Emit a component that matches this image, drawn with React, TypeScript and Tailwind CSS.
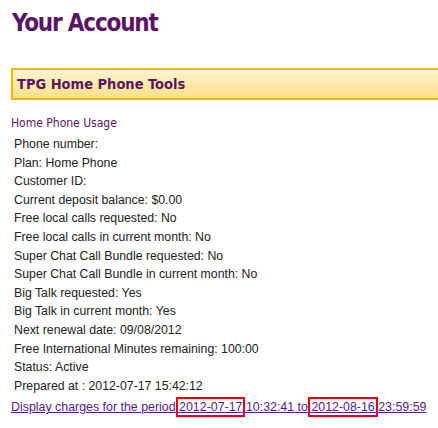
const rows = [
  "Phone number:",
  "Plan: Home Phone",
  "Customer ID:",
  "Current deposit balance: $0.00",
  "Free local calls requested: No",
  "Free local calls in current month: No",
  "Super Chat Call Bundle requested: No",
  "Super Chat Call Bundle in current month: No",
  "Big Talk requested: Yes",
  "Big Talk in current month: Yes",
  "Next renewal date: 09/08/2012",
  "Free International Minutes remaining: 100:00",
  "Status: Active",
  "Prepared at : 2012-07-17 15:42:12",
];

export default function App() {
  return (
    <div className="h-[428px] w-[438px] overflow-hidden bg-white">
      <h1 className="pl-3 pt-[8px] font-['DejaVu_Sans_Condensed','DejaVu_Sans',sans-serif] text-[24px] font-bold leading-[30px] tracking-[-1.2px] text-[#5a1464]">
        Your Account
      </h1>

      <div className="ml-[11px] mt-[30px] -mr-4 border-2 border-[#f2b700] bg-gradient-to-b from-[#fff4d0] to-[#ffdf86] py-[6px] pl-[4px]">
        <h2 className="font-['DejaVu_Sans_Condensed','DejaVu_Sans',sans-serif] text-[14.5px] font-bold leading-[16px] text-[#5a1464]">
          TPG Home Phone Tools
        </h2>
      </div>

      <div className="mt-[16px] pl-[11px] font-['DejaVu_Sans_Condensed','DejaVu_Sans',sans-serif] text-[12px] leading-[14px] text-[#5a1464]">
        Home Phone Usage
      </div>

      <ul className="mt-[5px] pl-[14px] font-['Liberation_Sans',Arial,sans-serif] text-[12.3px] leading-[18.6px] text-[#222]">
        {rows.map((r) => (
          <li key={r}>{r}</li>
        ))}
      </ul>

      <a
        href="#"
        className="mt-[3px] block pl-[11px] font-['Liberation_Sans',Arial,sans-serif] text-[12.4px] leading-[18px] text-[#551a8b] underline"
      >
        Display charges for the period{" "}
        <span className="outline-2 outline-[#e8000b] outline-offset-[1px]">2012-07-17</span>{" "}
        10:32:41 to{" "}
        <span className="outline-2 outline-[#e8000b] outline-offset-[1px]">2012-08-16</span>{" "}
        23:59:59
      </a>
    </div>
  );
}
